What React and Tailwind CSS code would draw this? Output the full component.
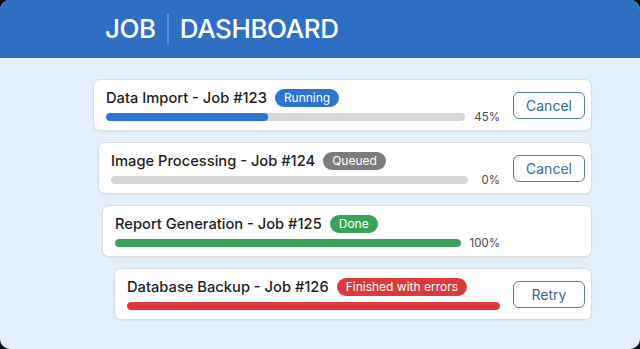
import React from 'react';

const jobs = [
  {
    name: 'Data Import - Job #123',
    status: 'Running',
    badge: 'bg-[#2d74d4]',
    fill: 'bg-[#2f74d0]',
    progress: 45,
    action: 'Cancel',
    indent: 'ml-[93px]',
  },
  {
    name: 'Image Processing - Job #124',
    status: 'Queued',
    badge: 'bg-[#7b7c7e]',
    fill: 'bg-[#7b7c7e]',
    progress: 0,
    action: 'Cancel',
    indent: 'ml-[98px]',
  },
  {
    name: 'Report Generation - Job #125',
    status: 'Done',
    badge: 'bg-[#3aa35b]',
    fill: 'bg-[#3aa35b]',
    progress: 100,
    action: null,
    indent: 'ml-[102px]',
  },
  {
    name: 'Database Backup - Job #126',
    status: 'Finished with errors',
    badge: 'bg-[#da3a3d]',
    fill: 'bg-[#da3a3d]',
    progress: 100,
    action: 'Retry',
    hidePercent: true,
    indent: 'ml-[114px]',
  },
];

const JobCard = ({ job }) => {
  return (
    <div className={`${job.indent} flex items-center h-[52px] pl-[12px] pr-[6px] bg-white border border-[#d7dde3] rounded-[7px] shadow-[0_1px_2px_rgba(0,0,0,0.05)]`}>
      <div className="flex-1 flex flex-col gap-[6px]">
        <div className="flex items-center gap-[8px] h-[18px]">
          <span className="text-[14.7px] font-medium text-[#1d1d1f] leading-none">{job.name}</span>
          <span className={`${job.badge} h-[18px] px-[9px] rounded-full text-[12px] text-white flex items-center leading-none`}>
            {job.status}
          </span>
        </div>
        <div className="flex items-center h-[8px]">
          <div className="flex-1 h-[8px] rounded-full bg-[#d5d7da] overflow-hidden">
            <div className={`${job.fill} h-full rounded-full`} style={{ width: `${job.progress}%` }} />
          </div>
          {!job.hidePercent && (
            <span className="min-w-[32px] pl-[9px] text-right text-[11.5px] text-[#4a4a4a] leading-none mt-[2px]">{job.progress}%</span>
          )}
        </div>
      </div>
      {job.action ? (
        <button className="ml-[13px] w-[72px] h-[27px] border border-[#4f7fae] rounded-[6px] text-[14px] text-[#3a689a] bg-white">
          {job.action}
        </button>
      ) : (
        <div className="ml-[13px] w-[72px]" />
      )}
    </div>
  );
};

export default function App() {
  return (
    <div className="w-[640px] h-[349px] bg-[#0d1117]" style={{ fontFamily: 'Inter, "Noto Sans", sans-serif' }}>
      <div className="w-full h-full rounded-[10px] overflow-hidden bg-[#e3effb] flex flex-col">
        <div className="h-[58px] bg-[#2e6fc3] flex items-center pl-[105px] text-white">
          <span className="text-[26px] font-medium tracking-[-0.4px] leading-none">JOB</span>
          <span className="w-[2px] h-[31px] bg-[#5a8fd6] mx-[11px]" />
          <span className="text-[26px] font-medium tracking-[-0.4px] leading-none">DASHBOARD</span>
        </div>
        <div className="pt-[21px] pr-[48px] flex flex-col gap-[11px]">
          {jobs.map((job) => (
            <JobCard key={job.name} job={job} />
          ))}
        </div>
      </div>
    </div>
  );
}
